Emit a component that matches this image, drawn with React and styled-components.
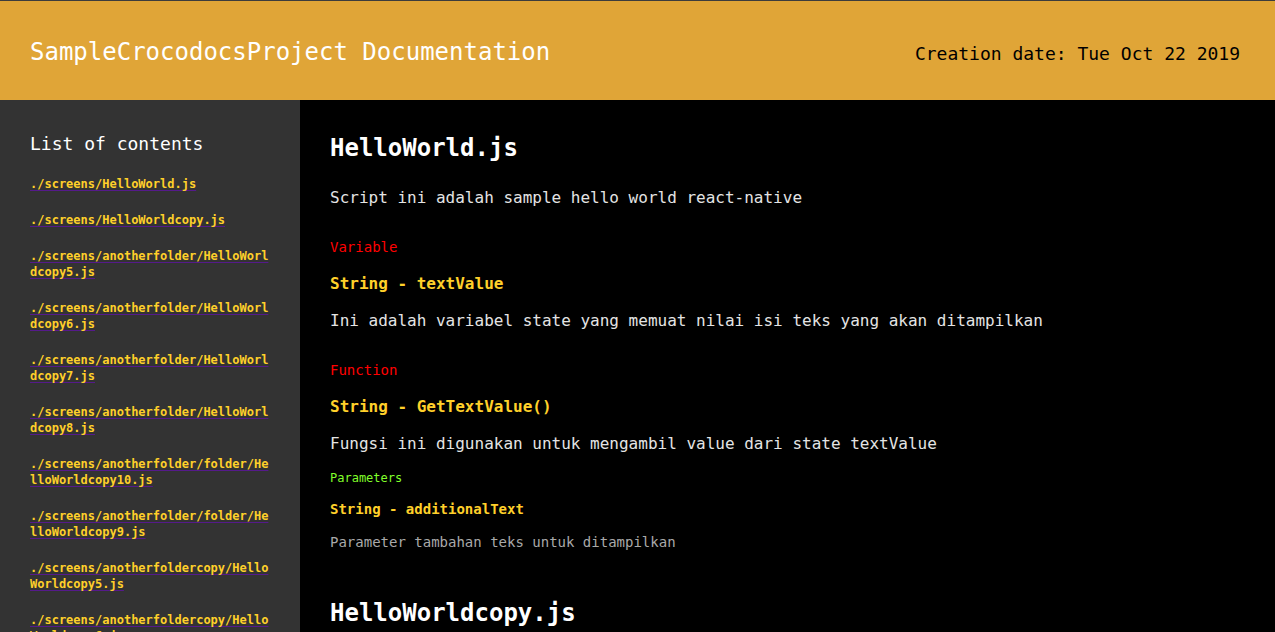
import React from 'react';
import styled, { createGlobalStyle } from 'styled-components';

const GlobalStyle = createGlobalStyle`
  html, body {
    margin: 0;
    padding: 0;
    background: #000;
    overflow: hidden;
  }
  body {
    font-family: "DejaVu Sans Mono", "Liberation Mono", monospace;
  }
`;

const Page = styled.div`
  display: flex;
  flex-direction: column;
  height: 632px;
`;

const Header = styled.header`
  display: flex;
  justify-content: space-between;
  align-items: center;
  box-sizing: border-box;
  height: 100px;
  padding: 2px 35px 0 30px;
  border-top: 1px solid #3c3c3c;
  background-color: #e0a537;
  flex-shrink: 0;
`;

const Title = styled.h1`
  margin: 0;
  color: #fff;
  font-size: 24px;
  font-weight: normal;
  line-height: 30px;
`;

const CreatedAt = styled.div`
  padding-top: 4px;
  color: #000;
  font-size: 18px;
  line-height: 24px;
`;

const Body = styled.div`
  display: flex;
  flex: 1;
  min-height: 0;
`;

const Sidebar = styled.nav`
  width: 240px;
  flex-shrink: 0;
  padding: 32px 30px 0;
  background-color: #333;
  overflow: hidden;
`;

const SidebarTitle = styled.h2`
  margin: 0 0 20px;
  color: #fff;
  font-size: 18px;
  font-weight: normal;
  line-height: 24px;
`;

const FileLink = styled.a`
  display: block;
  margin-bottom: 20px;
  color: #ffd02a;
  font-size: 12px;
  font-weight: bold;
  line-height: 16px;
  word-break: break-all;
  text-decoration: underline;
  text-decoration-color: #551a8b;
  text-underline-offset: 2px;
`;

const Main = styled.main`
  flex: 1;
  padding: 33px 30px 0;
  background: #000;
  overflow: hidden;
`;

const FileSection = styled.section`
  margin-bottom: 47px;
`;

const FileName = styled.h2`
  margin: 0 0 25px;
  color: #fff;
  font-size: 24px;
  font-weight: bold;
  line-height: 30px;
`;

const Description = styled.p`
  margin: 0 0 30px;
  color: #e4e4e4;
  font-size: 16px;
  line-height: 20px;
`;

const Group = styled.div`
  & + & {
    margin-top: 30px;
  }
`;

const Label = styled.div`
  margin: ${(p) => (p.$small ? '16px 0 0' : '0 0 18px')};
  color: ${(p) => p.$color};
  font-size: ${(p) => (p.$small ? '12px' : '14px')};
  line-height: ${(p) => (p.$small ? '16px' : '18px')};
`;

const Signature = styled.div`
  margin: ${(p) => (p.$small ? '14px 0 0' : '0 0 17px')};
  color: #ffd02a;
  font-size: ${(p) => (p.$small ? '14px' : '16px')};
  font-weight: bold;
  line-height: ${(p) => (p.$small ? '18px' : '20px')};
`;

const Text = styled.p`
  margin: ${(p) => (p.$small ? '15px 0 0' : '0')};
  color: ${(p) => (p.$small ? '#a9a9a9' : '#e4e4e4')};
  font-size: ${(p) => (p.$small ? '14px' : '16px')};
  line-height: ${(p) => (p.$small ? '18px' : '20px')};
`;

const files = [
  './screens/HelloWorld.js',
  './screens/HelloWorldcopy.js',
  './screens/anotherfolder/HelloWorldcopy5.js',
  './screens/anotherfolder/HelloWorldcopy6.js',
  './screens/anotherfolder/HelloWorldcopy7.js',
  './screens/anotherfolder/HelloWorldcopy8.js',
  './screens/anotherfolder/folder/HelloWorldcopy10.js',
  './screens/anotherfolder/folder/HelloWorldcopy9.js',
  './screens/anotherfoldercopy/HelloWorldcopy5.js',
  './screens/anotherfoldercopy/HelloWorldcopy6.js',
];

const App = () => (
  <>
    <GlobalStyle />
    <Page>
      <Header>
        <Title>SampleCrocodocsProject Documentation</Title>
        <CreatedAt>Creation date: Tue Oct 22 2019</CreatedAt>
      </Header>
      <Body>
        <Sidebar>
          <SidebarTitle>List of contents</SidebarTitle>
          {files.map((f) => (
            <FileLink key={f} href="#">{f}</FileLink>
          ))}
        </Sidebar>
        <Main>
          <FileSection>
            <FileName>HelloWorld.js</FileName>
            <Description>Script ini adalah sample hello world react-native</Description>
            <Group>
              <Label $color="#ff0000">Variable</Label>
              <Signature>String - textValue</Signature>
              <Text>Ini adalah variabel state yang memuat nilai isi teks yang akan ditampilkan</Text>
            </Group>
            <Group>
              <Label $color="#ff0000">Function</Label>
              <Signature>String - GetTextValue()</Signature>
              <Text>Fungsi ini digunakan untuk mengambil value dari state textValue</Text>
              <Label $small $color="#80ff2a">Parameters</Label>
              <Signature $small>String - additionalText</Signature>
              <Text $small>Parameter tambahan teks untuk ditampilkan</Text>
            </Group>
          </FileSection>
          <FileSection>
            <FileName>HelloWorldcopy.js</FileName>
          </FileSection>
        </Main>
      </Body>
    </Page>
  </>
);

export default App;
